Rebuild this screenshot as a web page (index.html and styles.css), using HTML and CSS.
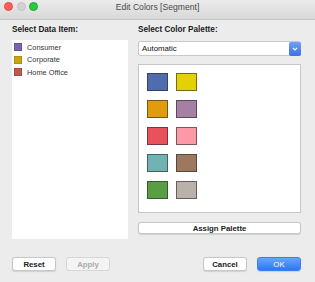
FILE: index.html
```html
<!DOCTYPE html>
<html lang="en">
<head>
    <meta charset="UTF-8">
    <title>Edit Colors [Segment]</title>
    <link rel="stylesheet" href="styles.css">
</head>
<body>
    <div class="window">
        <div class="titlebar">
            <div class="lights">
                <span class="light red"></span>
                <span class="light off"></span>
                <span class="light green"></span>
            </div>
            <div class="title">Edit Colors [Segment]</div>
        </div>

        <div class="content">
            <div class="col-left">
                <div class="label">Select Data Item:</div>
                <ul class="item-list">
                    <li class="item"><span class="chip" style="background:#7a63b3"></span>Consumer</li>
                    <li class="item"><span class="chip" style="background:#c9a513"></span>Corporate</li>
                    <li class="item"><span class="chip" style="background:#bd5a4e"></span>Home Office</li>
                </ul>
            </div>

            <div class="col-right">
                <div class="label">Select Color Palette:</div>
                <div class="select">
                    <span class="select-text">Automatic</span>
                    <span class="select-btn">
                        <svg width="6" height="4" viewBox="0 0 6 4"><path d="M0.8 0.8 L3 3 L5.2 0.8" fill="none" stroke="#fff" stroke-width="1.1"/></svg>
                    </span>
                </div>
                <div class="palette">
                    <span class="swatch" style="background:#4f6cae"></span>
                    <span class="swatch" style="background:#e2d204"></span>
                    <span class="swatch" style="background:#e09c0e"></span>
                    <span class="swatch" style="background:#a680a4"></span>
                    <span class="swatch" style="background:#e8525c"></span>
                    <span class="swatch" style="background:#fb9aa6"></span>
                    <span class="swatch" style="background:#70b3b2"></span>
                    <span class="swatch" style="background:#9d7860"></span>
                    <span class="swatch" style="background:#5a9e44"></span>
                    <span class="swatch" style="background:#bab1ab"></span>
                </div>
                <button class="btn assign-btn">Assign Palette</button>
            </div>
        </div>

        <div class="footer">
            <div class="btn-group">
                <button class="btn">Reset</button>
                <button class="btn disabled">Apply</button>
            </div>
            <div class="btn-group">
                <button class="btn">Cancel</button>
                <button class="btn primary">OK</button>
            </div>
        </div>
    </div>
</body>
</html>
```

FILE: styles.css
```css
* {
    margin: 0;
    padding: 0;
    box-sizing: border-box;
}

body {
    font-family: 'Liberation Sans', Arial, sans-serif;
    color: #1a1a1a;
    background-color: #ececec;
    width: 315px;
    height: 282px;
    overflow: hidden;
}

.window {
    display: flex;
    flex-direction: column;
    height: 282px;
    background-color: #ececec;
}

.titlebar {
    position: relative;
    height: 20px;
    background: linear-gradient(#ebebeb, #d8d8d8);
    border-bottom: 1px solid #c4c4c4;
    display: flex;
    align-items: center;
    justify-content: center;
}

.lights {
    position: absolute;
    left: 4px;
    top: 2px;
    display: flex;
    gap: 3.5px;
}

.light {
    width: 9px;
    height: 9px;
    border-radius: 50%;
}

.light.red {
    background-color: #fc5f57;
    border: 0.5px solid #e14942;
}

.light.off {
    background-color: #d2d2d2;
    border: 0.5px solid #c2c2c2;
}

.light.green {
    background-color: #2bc840;
    border: 0.5px solid #1fa92f;
}

.title {
    font-size: 8.6px;
    color: #4a4a4a;
    margin-top: -6px;
}

.content {
    display: flex;
    gap: 10px;
    padding: 0 14px 0 12px;
}

.col-left {
    width: 116px;
    display: flex;
    flex-direction: column;
}

.col-right {
    width: 163px;
    display: flex;
    flex-direction: column;
}

.label {
    font-size: 8.2px;
    font-weight: 700;
    line-height: 10px;
    padding-top: 5px;
    height: 20px;
}

.item-list {
    list-style: none;
    background-color: #fff;
    height: 199px;
    padding: 1px 2px;
}

.item {
    display: flex;
    align-items: center;
    gap: 5px;
    height: 12.6px;
    font-size: 7.4px;
    color: #333;
}

.chip {
    width: 8px;
    height: 8px;
    box-shadow: inset 0 0 0 0.5px rgba(0,0,0,0.25);
}

.select {
    margin-top: 1px;
    height: 15px;
    display: flex;
    align-items: center;
    background-color: #fff;
    border: 1px solid #c9c9c9;
    border-radius: 2px;
}

.select-text {
    flex: 1;
    font-size: 7.8px;
    padding-left: 3px;
    color: #111;
}

.select-btn {
    width: 12px;
    height: 14px;
    margin-right: -1px;
    border-radius: 2px;
    background: linear-gradient(#6e9ff6, #3d6fe8);
    display: flex;
    align-items: center;
    justify-content: center;
}

.palette {
    margin-top: 8px;
    height: 149px;
    background-color: #fff;
    border: 1px solid #c6c6c6;
    padding: 8px 0 0 8px;
    display: grid;
    grid-template-columns: repeat(2, 21px);
    grid-auto-rows: 18px;
    column-gap: 8px;
    row-gap: 9px;
}

.swatch {
    border: 1px solid rgba(40,40,40,0.6);
}

.btn {
    font-family: inherit;
    font-size: 7.8px;
    font-weight: 700;
    color: #222;
    background-color: #fff;
    border: 1px solid #c8c8c8;
    border-radius: 3px;
    box-shadow: 0 0.5px 1px rgba(0,0,0,0.12);
    width: 44px;
    height: 14px;
}

.assign-btn {
    margin-top: 9px;
    width: 163px;
    height: 12px;
}

.footer {
    display: flex;
    justify-content: space-between;
    padding: 18px 14px 0 12px;
}

.btn-group {
    display: flex;
    gap: 10px;
}

.btn.disabled {
    color: #aaa;
    background-color: #f4f4f4;
    border-color: #d6d6d6;
    box-shadow: none;
}

.btn.primary {
    color: #fff;
    background: linear-gradient(#66a6fb, #2d78f4);
    border-color: #3a7ef0;
    font-weight: 400;
}
```
